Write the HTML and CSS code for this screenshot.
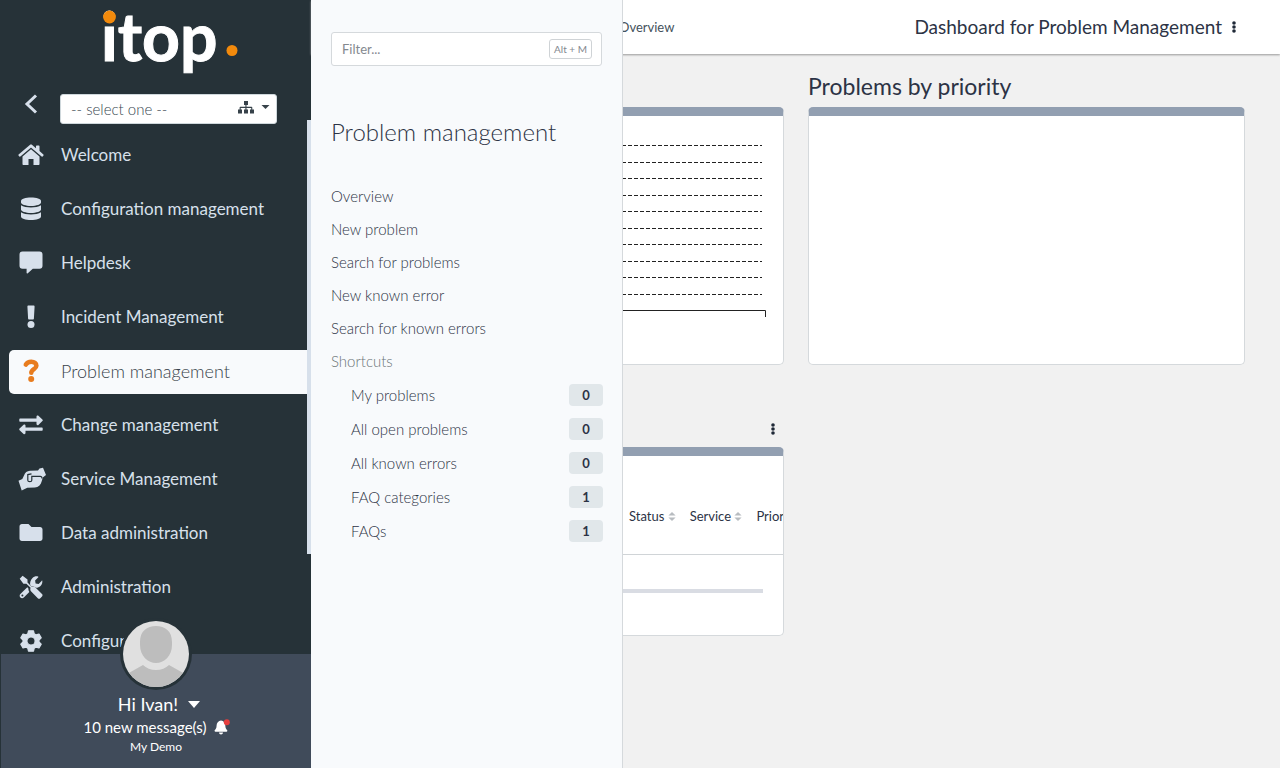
FILE: index.html
```html
<!DOCTYPE html>
<html lang="en">
<head>
<meta charset="utf-8">
<title>Dashboard for Problem Management</title>
<link rel="stylesheet" href="styles.css">
</head>
<body>
<div class="app">
  <aside class="sidebar">
    <header class="brand">
      <svg class="logo" viewBox="0 0 140 78" role="img" aria-label="itop">
        <text class="logo-text" x="3" y="55">itop</text>
        <circle class="logo-dot" cx="11.500" cy="11" r="6.400"/>
        <circle class="logo-dot" cx="134" cy="44.500" r="5.500"/>
      </svg>
      <div class="scope">
        <button class="collapse" type="button" aria-label="Collapse menu">
          <svg viewBox="0 0 14 20"><path d="M12 1.500 3 10l9 8.500"/></svg>
        </button>
        <div class="org">
          <select class="org-select" aria-label="Organization"><option>-- select one --</option></select>
          <svg class="org-icon" viewBox="0 0 32 13" aria-hidden="true">
            <path d="M6 0h4v4H8.500v1.700h5c.5 0 .8.300.8.800V8.500H16v4h-4v-4h1.200V6.900H8.500v1.600H10v4H6v-4h1.400V6.900H2.700v1.600H4v4H0v-4h1.600v-2c0-.5.300-.8.800-.8h5V4H6zM23.500 4h8l-4 4z"/>
          </svg>
        </div>
      </div>
    </header>
    <nav class="menu" aria-label="Main">
      <a class="menu-item" href="#"><svg viewBox="0 0 26 26"><path d="M13 7.300 4.500 14.500V22c0 .6.400 1 1 1h5v-6h5v6h5c.6 0 1-.4 1-1v-7.500z"/><path d="M.6 12.400 11.800 3c.7-.6 1.700-.6 2.400 0L18 6.200V4.200c0-.4.300-.7.700-.7h2.100c.4 0 .7.300.7.700v4.900l3.900 3.300c.3.300.4.700.1 1l-.9 1.100c-.3.300-.7.300-1 .1L13.500 5.900c-.3-.2-.7-.2-1 0L2.400 14.600c-.3.200-.7.200-1-.1l-.9-1.100c-.3-.3-.2-.7.100-1z"/></svg><span>Welcome</span></a>
      <a class="menu-item" href="#"><svg viewBox="0 0 26 26"><path d="M3 5c0-2 4.500-3.500 10-3.500S23 3 23 5v1.500C23 8.300 18.500 10 13 10S3 8.300 3 6.500z"/><path d="M3 9.200C5.300 10.800 9 11.400 13 11.400s7.700-.6 10-2.200v4.300c0 1.800-4.500 3.500-10 3.500S3 15.300 3 13.500z"/><path d="M3 16.200c2.300 1.600 6 2.200 10 2.200s7.700-.6 10-2.200v4.300c0 2-4.500 3.500-10 3.500S3 22.500 3 20.500z"/></svg><span>Configuration management</span></a>
      <a class="menu-item" href="#"><svg viewBox="0 0 26 26"><path d="M4.500 1.500h17A3 3 0 0 1 24.500 4.500v11.200a3 3 0 0 1-3 3h-6.700L9.500 23.500c-.4.300-.9 0-.9-.4v-4.400H4.500a3 3 0 0 1-3-3V4.500a3 3 0 0 1 3-3z"/></svg><span>Helpdesk</span></a>
      <a class="menu-item" href="#"><svg viewBox="0 0 26 26"><path d="M10.400 1.500h5.200c.6 0 1 .5 1 1l-.7 12c0 .6-.5 1-1 1h-3.800c-.5 0-1-.4-1-1l-.7-12c0-.5.400-1 1-1z"/><circle cx="13" cy="20.500" r="3.500"/></svg><span>Incident Management</span></a>
      <a class="menu-item active" href="#" aria-current="page"><svg viewBox="0 0 26 26"><path class="stroke-mark" d="M7.800 6.600C9 4.500 10.800 3.700 13.300 3.700c3 0 5.100 1.600 5.100 4 0 3.400-5.100 3.500-5.100 7.100"/><circle cx="13.200" cy="21" r="3"/></svg><span>Problem management</span></a>
      <a class="menu-item" href="#"><svg viewBox="0 0 26 26"><path d="M2 6.500h16.500V4.600c0-1 1.200-1.500 1.900-.8l4 3.700c.5.500.5 1.200 0 1.600l-4 3.800c-.7.600-1.900.2-1.900-.8V9.800H2c-.4 0-.7-.3-.7-.7V7.200c0-.4.300-.7.700-.7z"/><path d="M24 15.500H7.500v-1.900c0-1-1.200-1.500-1.900-.8l-4 3.800c-.5.400-.5 1.100 0 1.600l4 3.700c.7.700 1.900.2 1.900-.8v-2.300H24c.4 0 .7-.3.700-.7v-1.900c0-.4-.3-.7-.7-.7z"/></svg><span>Change management</span></a>
      <a class="menu-item" href="#"><svg class="wide" viewBox="0 0 28 26"><path d="M.5 14.800 4.300 13 6 9.500C7 6.500 9 5 12 4.800l8-.3L21.500 2.600 25 1.800 28 9l-3.200 2.600-1 3.400c-1 4-3.400 6.300-7 6.500l-7.500.2-5.600 2.800z"/><path class="cut" d="M13.500 7.800 9.800 8.600v5.600c0 2 4 2 4 0v-3.800h8.400c1.200 0 1.800.8 1.800 2"/></svg><span>Service Management</span></a>
      <a class="menu-item" href="#"><svg viewBox="0 0 26 26"><path d="M4 4h6.500l3 3H22c1.500 0 2.500 1 2.500 2.500v9c0 1.500-1 2.500-2.500 2.500H4c-1.500 0-2.500-1-2.500-2.500v-12C1.500 5 2.500 4 4 4z"/></svg><span>Data administration</span></a>
      <a class="menu-item" href="#"><svg viewBox="0 0 26 26"><path d="m4.600 1.800 4.900 3.700v3l4.200 4.200c1.200-.5 2.700-.3 3.700.7l6.600 6.600c.7.700.7 1.800 0 2.500l-1.700 1.700c-.7.700-1.800.7-2.500 0l-6.600-6.600c-1-1-1.200-2.500-.6-3.800L8.400 9.700h-3L1.700 4.800z"/><path d="M24.200 6.200c.5 2-.1 4.300-1.700 5.800-1.300 1.300-3 1.900-4.700 1.800-1.500-1.200-3.200-1.700-4.300-1.400l-1.300-1.300C11.800 8.600 12.500 6 14.300 4.200c1.600-1.600 3.700-2.200 5.700-1.700.4.100.5.600.3.800l-3.200 3.200.5 3.100 3 .5 3-3.100c.1-.4.600-.3.600-.8zM10.300 14.300c0 1.300.3 2.500 1 3.600l-5.500 5.600c-1 1-2.500 1-3.400 0-1-.9-1-2.400 0-3.400l6.900-6.800z"/><circle class="hole" cx="4.400" cy="21.500" r="1"/></svg><span>Administration</span></a>
      <a class="menu-item" href="#"><svg viewBox="0 0 26 26"><path class="gear" fill-rule="evenodd" d="M10.500 2.800 15.500 2.800 16.200 5.800 18.100 6.900 21 6 23.200 9.800 21 12 21 14 23.200 16.200 21 20 18.100 19.100 16.200 20.200 15.500 23.200 10.500 23.200 9.800 20.200 7.900 19.100 5 20 2.800 16.200 5 14 5 12 2.800 9.800 5 6 7.900 6.900 9.800 5.800zM13 8.900a4.100 4.100 0 1 0 0 8.200 4.100 4.100 0 0 0 0-8.200z"/></svg><span>Configuration</span></a>
    </nav>
    <div class="scroll-thumb"></div>
    <footer class="user">
      <svg class="avatar" viewBox="0 0 72 72" role="img" aria-label="Ivan">
        <defs><clipPath id="face"><circle cx="36" cy="36" r="33"/></clipPath></defs>
        <circle class="ring" cx="36" cy="36" r="36"/>
        <g clip-path="url(#face)">
          <path class="face-bg" d="M0 0h72v72H0z"/>
          <path class="face-fg" d="M20 24c0-11 7-16 16-16s16 5 16 16v3c0 11-8 18-16 18s-16-7-16-18zM0 60l23-13c3 3 8 5 13 5s10-2 13-5l23 13v12H0z"/>
        </g>
      </svg>
      <button class="user-name" type="button">Hi Ivan! <svg viewBox="0 0 12 7"><path d="M0 0h12L6 7z"/></svg></button>
      <a class="user-news" href="#">10 new message(s) <svg viewBox="0 0 16 16"><path d="M7 1.500c2.800.3 4.300 2.500 4.300 5 0 2.800 1 3.800 2 4.900.4.500 0 1.300-.7 1.300H1.300c-.7 0-1.100-.8-.7-1.300 1-1.100 2-2.100 2-4.900 0-2.500 1.700-4.700 4.400-5zM5 13.600h4c0 2.500-4 2.500-4 0z"/><circle class="alert" cx="12.800" cy="3.200" r="3"/></svg></a>
      <span class="user-org">My Demo</span>
    </footer>
  </aside>

  <main class="page">
    <section class="drawer" aria-label="Problem management menu">
      <div class="filter">
        <input class="filter-input" type="text" placeholder="Filter..." aria-label="Filter">
        <kbd class="filter-key">Alt + M</kbd>
      </div>
      <h2 class="drawer-title">Problem management</h2>
      <a class="drawer-link" href="#">Overview</a>
      <a class="drawer-link" href="#">New problem</a>
      <a class="drawer-link" href="#">Search for problems</a>
      <a class="drawer-link" href="#">New known error</a>
      <a class="drawer-link" href="#">Search for known errors</a>
      <div class="drawer-link muted">Shortcuts</div>
      <a class="shortcut" href="#">My problems <span class="count">0</span></a>
      <a class="shortcut" href="#">All open problems <span class="count">0</span></a>
      <a class="shortcut" href="#">All known errors <span class="count">0</span></a>
      <a class="shortcut" href="#">FAQ categories <span class="count">1</span></a>
      <a class="shortcut" href="#">FAQs <span class="count">1</span></a>
    </section>

    <header class="topbar">
      <a class="crumb" href="#">Overview</a>
      <h1 class="page-title">Dashboard for Problem Management</h1>
      <button class="kebab" type="button" aria-label="Dashboard actions"><svg viewBox="0 0 4 12"><circle cx="2" cy="2" r="1.800"/><circle cx="2" cy="6" r="1.800"/><circle cx="2" cy="10" r="1.800"/></svg></button>
    </header>

    <div class="dashboard">
      <section class="dashlet">
        <div class="dashlet-head"></div>
        <div class="card chart-card">
          <svg class="chart" viewBox="0 0 420 180">
            <path class="grid-line" d="M0 3.500h414M0 20.500h414M0 36.500h414M0 53.500h414M0 69.500h414M0 86.500h414M0 102.500h414M0 119.500h414M0 135.500h414M0 152.500h414"/>
            <path class="axis" d="M0 168.500h417.500v6.500"/>
          </svg>
        </div>
      </section>
      <section class="dashlet">
        <div class="dashlet-head"><h2>Problems by priority</h2></div>
        <div class="card chart-card"></div>
      </section>
      <section class="dashlet">
        <div class="dashlet-head end"><button class="kebab" type="button" aria-label="List actions"><svg viewBox="0 0 4 12"><circle cx="2" cy="2" r="1.800"/><circle cx="2" cy="6" r="1.800"/><circle cx="2" cy="10" r="1.800"/></svg></button></div>
        <div class="card list-card">
          <table class="list">
            <thead><tr>
              <th>Status <svg viewBox="0 0 8 10"><path d="M0 4l4-4 4 4zM0 6h8l-4 4z"/></svg></th>
              <th>Service <svg viewBox="0 0 8 10"><path d="M0 4l4-4 4 4zM0 6h8l-4 4z"/></svg></th>
              <th>Priority</th>
            </tr></thead>
          </table>
          <div class="list-track"></div>
        </div>
      </section>
    </div>
  </main>
</div>
</body>
</html>
```
FILE: styles.css
```css
* { box-sizing: border-box; }
body {
  margin: 0;
  font-family: Lato, "Open Sans", sans-serif;
  font-size: 15px;
  color: #2c3345;
  background: #f1f1f1;
}
a { color: inherit; text-decoration: none; }
button { padding: 0; border: 0; background: none; font: inherit; color: inherit; cursor: pointer; }
h1, h2 { margin: 0; font-weight: 400; }
svg { display: block; fill: currentColor; flex: none; }

.app { display: flex; height: 100vh; }

/* Sidebar */
.sidebar {
  position: relative;
  flex: none;
  display: flex;
  flex-direction: column;
  width: 311px;
  background: #263238;
  color: #d7e0eb;
}
.brand { flex: none; padding-top: 6px; }
.logo { width: 140px; height: 78px; margin-left: 98px; overflow: visible; }
.logo-text { font-size: 66px; font-weight: 700; fill: #fff; stroke: #fff; stroke-width: 1; }
.logo-dot { fill: #f28a0c; }
.scope { display: flex; gap: 22px; margin: 10px 34px 0 24px; }
.collapse { height: 20px; }
.collapse svg { width: 14px; height: 20px; fill: none; stroke: currentColor; stroke-width: 3; }
.org { position: relative; flex: 1; height: 30px; }
.org-select {
  appearance: none;
  width: 100%;
  height: 30px;
  padding: 0 10px;
  border: 1px solid #cfd8dc;
  border-radius: 3px;
  background: #fff;
  color: #37474f;
  font: 300 15px Lato, sans-serif;
}
.org-icon { position: absolute; right: 7px; top: 7px; width: 32px; height: 13px; fill: #37424a; pointer-events: none; }

.menu {
  flex: 1;
  min-height: 0;
  display: flex;
  flex-direction: column;
  gap: 10px;
  padding: 10px 4px 0 9px;
  overflow: hidden;
}
.menu-item {
  flex: none;
  display: flex;
  align-items: center;
  gap: 17px;
  height: 44px;
  padding: 0 0 3px 9px;
  border-radius: 5px 0 0 5px;
  font-size: 17px;
}
.menu-item svg { width: 26px; height: 26px; }
.menu-item .wide { width: 28px; margin-right: -2px; }
.menu-item.active { background: #f8fafc; color: #37424a; font-size: 18px; font-weight: 300; }
.menu-item.active svg { fill: #e87c1e; }
.stroke-mark { fill: none; stroke: #e87c1e; stroke-width: 4.500; stroke-linecap: round; }
.gear { stroke: currentColor; stroke-width: 1.200; stroke-linejoin: round; }
.cut { fill: none; stroke: #263238; stroke-width: 1.200; }
.hole { fill: #263238; }
.scroll-thumb { position: absolute; top: 120px; bottom: 214px; right: 0; width: 4px; background: #d7e0eb; }

.user {
  position: relative;
  flex: none;
  display: flex;
  flex-direction: column;
  align-items: center;
  height: 114px;
  margin-left: 1px;
  padding-top: 38px;
  background: #404b5a;
  color: #fff;
}
.avatar { position: absolute; top: -36px; width: 72px; height: 72px; }
.ring { fill: #263238; }
.face-bg { fill: #e0e0e0; }
.face-fg { fill: #bdbdbd; }
.user-name { display: flex; align-items: center; gap: 10px; padding-left: 6px; font-size: 18px; line-height: 24px; }
.user-name svg { width: 12px; height: 7px; }
.user-news { display: flex; align-items: center; gap: 8px; padding-left: 2px; font-size: 15px; line-height: 22px; }
.user-news svg { width: 16px; height: 16px; }
.alert { fill: #e53e3e; }
.user-org { font-size: 12px; line-height: 18px; }

/* Drawer */
.page { position: relative; flex: 1; min-width: 0; }
.drawer {
  position: absolute;
  top: 0;
  bottom: 0;
  left: 0;
  z-index: 2;
  width: 312px;
  padding: 32px 20px;
  border-right: 1px solid #d5d9dc;
  background: #f8fafc;
  font-weight: 300;
}
.filter {
  display: flex;
  align-items: center;
  height: 34px;
  padding: 0 9px 0 10px;
  border: 1px solid #d5d9dc;
  border-radius: 3px;
  background: #fff;
}
.filter-input { flex: 1; min-width: 0; padding: 0; border: 0; background: none; font: 400 13px Lato, sans-serif; }
.filter-input::placeholder { color: #84898f; }
.filter-key { padding: 0 4px; border: 1px solid #cfd3d6; border-radius: 3px; font: 400 10px/18px Lato, sans-serif; color: #84898f; }
.drawer-title { margin: 50px 0 32px; font-size: 24px; line-height: 32px; font-weight: 300; }
.drawer-link { display: block; line-height: 33px; }
.drawer-link.muted { color: #6b7477; }
.shortcut { display: flex; align-items: center; justify-content: space-between; height: 34px; margin-right: -1px; padding-left: 20px; }
.count { width: 34px; border-radius: 4px; background: #e1e7ea; font-size: 13px; line-height: 22px; font-weight: 700; text-align: center; }

/* Content */
.topbar {
  display: flex;
  align-items: center;
  height: 54px;
  padding: 0 42px 1px 308px;
  background: #fff;
  box-shadow: 0 1px 2px #999;
}
.crumb { font-size: 13px; color: #45525c; }
.page-title { margin-left: auto; font-size: 19px; }
.kebab { padding: 0 2px; margin-left: 8px; color: #1f2937; }
.kebab svg { width: 4px; height: 12px; }
.dashboard {
  display: grid;
  grid-template-columns: 1fr 1fr;
  gap: 42px 24px;
  padding: 13px 35px 0 36px;
}
.dashlet { min-width: 0; }
.dashlet-head { display: flex; align-items: center; height: 40px; padding-bottom: 2px; }
.dashlet-head h2 { font-size: 23px; }
.dashlet-head.end { justify-content: flex-end; padding: 4px 7px 0 0; }
.card {
  border: 1px solid #d5d9dc;
  border-top: 9px solid #929fb1;
  border-radius: 5px;
  background: #fff;
  overflow: hidden;
}
.chart-card { height: 258px; }
.chart { width: 420px; height: 180px; margin-top: 26px; }
.grid-line { stroke: #222; stroke-dasharray: 4 2; stroke-dashoffset: 2; }
.axis { fill: none; stroke: #222; }
.list-card { height: 189px; }
.list { width: 100%; padding-left: 281px; border-spacing: 0; border-bottom: 1px solid #d0d4d7; }
.list th { height: 98px; padding: 22px 14px 0 0; font-size: 13px; font-weight: 400; text-align: left; white-space: nowrap; }
.list th svg { display: inline-block; width: 8px; height: 9px; fill: #b8bcc0; }
.list-track { height: 4px; margin: 34px 20px 0; background: #d9dce3; }
```
